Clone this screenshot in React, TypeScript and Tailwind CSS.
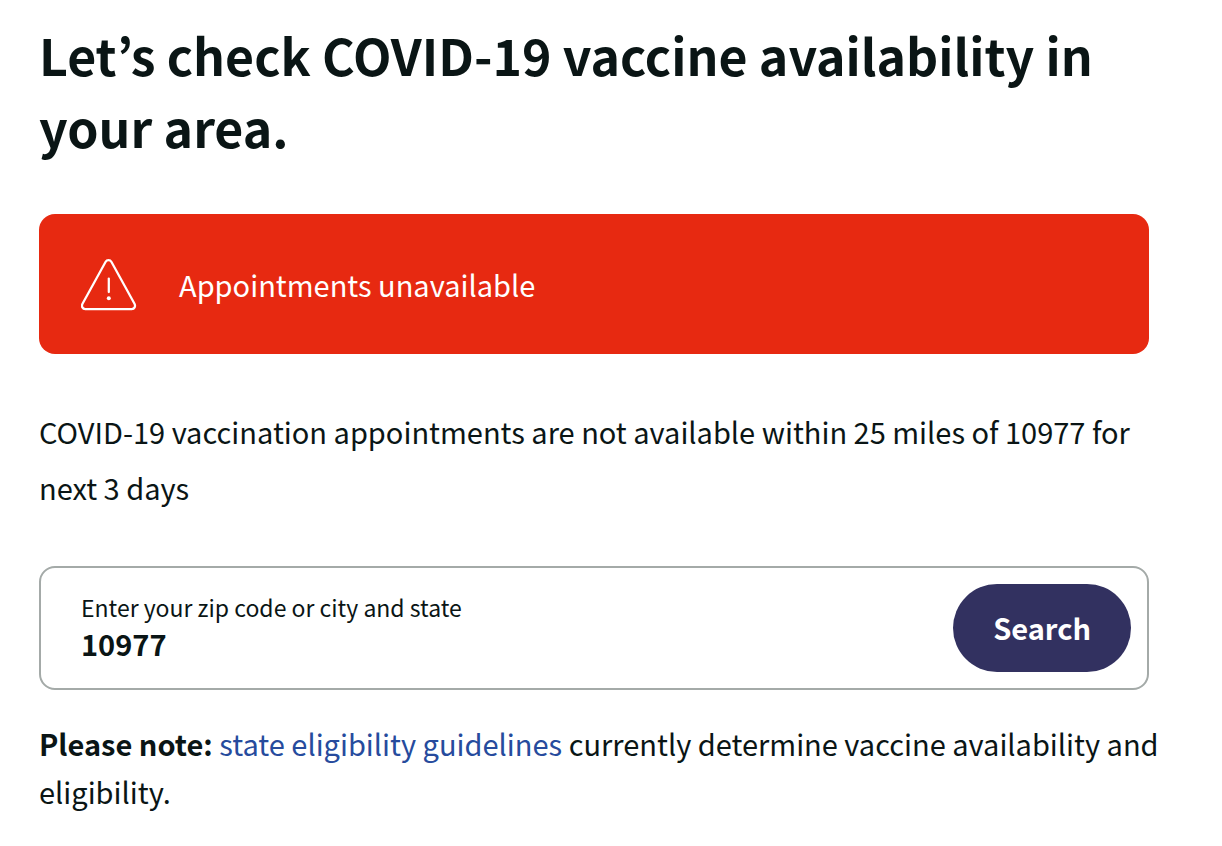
import React, { useState } from 'react';

const AlertIcon: React.FC = () => (
  <svg
    className="h-14 w-14 shrink-0"
    viewBox="0 0 56 56"
    fill="none"
    stroke="currentColor"
    strokeWidth="2.25"
    strokeLinecap="round"
    strokeLinejoin="round"
    aria-hidden="true"
  >
    <path d="M24.5 6 1.5 47.800C.2 50.400 1.500 53 4.300 53h46.400c2.800 0 4.100-2.600 2.800-5.200L30.500 6c-1.400-2.500-4.600-2.500-6 0Z" />
    <path d="M27.800 22.500v13.500" />
    <circle cx="27.800" cy="42.300" r="2" fill="currentColor" stroke="none" />
  </svg>
);

const App: React.FC = () => {
  const [location, setLocation] = useState('10977');

  return (
    <main className="bg-white pt-[18px] pr-[73px] pb-7 pl-[39px] font-['Noto_Sans_CJK_KR',sans-serif] text-[29px] text-[#0a1515]">
      <h1 className="text-[50px] leading-[72px] font-bold">
        Let’s check COVID-19 vaccine availability in your area.
      </h1>

      <div
        role="alert"
        className="mt-[52px] flex items-center gap-[42px] rounded-2xl bg-[#e72911] px-[42px] py-[42px] leading-[56px] text-white"
      >
        <AlertIcon />
        <p>Appointments unavailable</p>
      </div>

      <p className="mt-[49px] leading-[56px]">
        COVID-19 vaccination appointments are not available within 25 miles of 10977 for next 3 days
      </p>

      <form
        onSubmit={(e) => e.preventDefault()}
        className="mt-[51px] flex items-center gap-4 rounded-2xl border-2 border-[#a4aaa8] py-4 pr-4 pl-10"
      >
        <div className="flex min-w-0 flex-1 flex-col pb-1.5">
          <label htmlFor="location" className="text-[23px] leading-9">
            Enter your zip code or city and state
          </label>
          <input
            id="location"
            type="text"
            value={location}
            onChange={(e) => setLocation(e.target.value)}
            className="h-9 w-full leading-9 font-bold outline-none"
          />
        </div>
        <button
          type="submit"
          className="h-[88px] shrink-0 rounded-full bg-[#323160] px-10 font-bold text-white"
        >
          Search
        </button>
      </form>

      <p className="-mr-4 mt-[29px] leading-[48px]">
        <strong className="font-bold">Please note:</strong>{' '}
        <a href="#guidelines" className="text-[#264b9d]">
          state eligibility guidelines
        </a>{' '}
        currently determine vaccine availability and eligibility.
      </p>
    </main>
  );
};

export default App;
